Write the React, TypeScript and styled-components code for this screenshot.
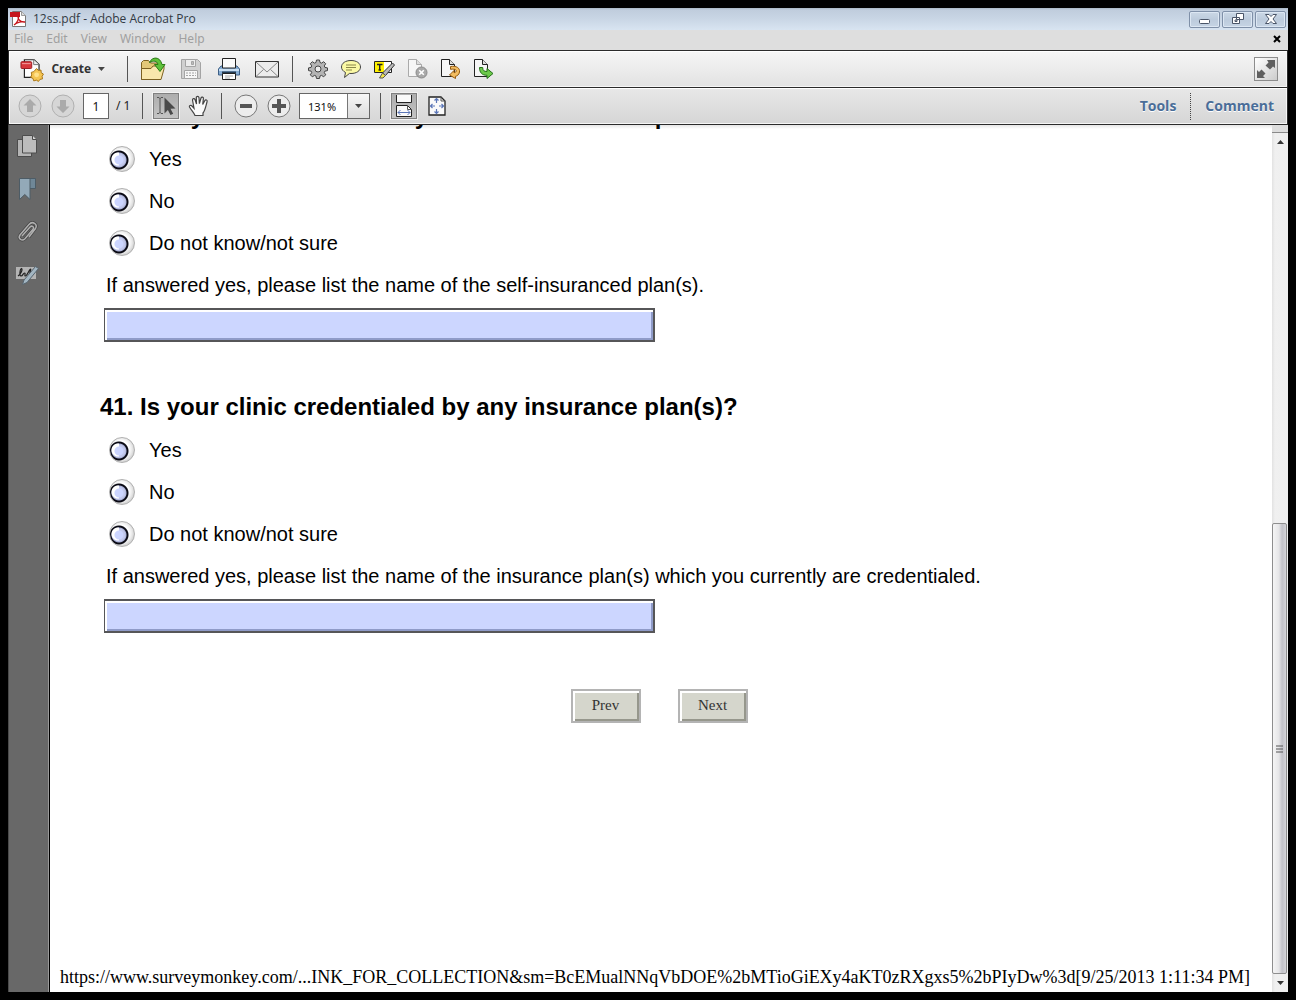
import React from "react";
import styled, { createGlobalStyle } from "styled-components";

const GlobalStyle = createGlobalStyle`
  *, *::before, *::after { box-sizing: border-box; }
  body { margin: 0; background: #000; }
  button, input, select { font: inherit; color: inherit; margin: 0; }
`;

const ui = `"Open Sans", "Noto Sans", sans-serif`;
const tahoma = `"Noto Sans", "DejaVu Sans", sans-serif`;

const Desktop = styled.div`
  height: 100vh;
  padding: 8px;
  background: #000;
`;

const Window = styled.div`
  height: 100%;
  display: flex;
  flex-direction: column;
  background: #dedede;
  font-family: ${ui};
`;

const TitleBar = styled.header`
  height: 22px;
  flex: none;
  display: flex;
  align-items: center;
  gap: 6px;
  padding: 0 2px 0 1px;
  background: linear-gradient(#a9b6c4 0, #c0cddd 2px, #c9d6e5 50%, #d8e4f1);
`;

const Title = styled.h1`
  margin: 0;
  flex: 1;
  font-size: 12px;
  line-height: 20px;
  font-weight: 400;
  color: #333a44;
`;

const WindowButtons = styled.div`
  display: flex;
  gap: 2px;
`;

const WindowButton = styled.button`
  width: 31px;
  height: 17px;
  padding: 0;
  display: grid;
  place-items: center;
  border: 1px solid #7f90a8;
  border-radius: 2px;
  box-shadow: inset 0 0 0 1px #dce7f3;
  background: linear-gradient(#cbd8e6, #bccbdc 50%, #c6d4e4);
`;

const MenuBar = styled.nav`
  height: 20px;
  flex: none;
  display: flex;
  align-items: center;
  gap: 13px;
  padding: 0 6px 2px;
  background: #dedede;
`;

const MenuItem = styled.button`
  border: 0;
  padding: 0;
  background: none;
  font-family: ${tahoma};
  font-size: 12px;
  line-height: 18px;
  color: #a0a0a0;
`;

const CloseDoc = styled.button`
  margin-left: auto;
  width: 10px;
  height: 10px;
  padding: 0;
  display: grid;
  place-items: center;
  border: 0;
  background: none;
`;

const Toolbar = styled.div<{ $from: string; $to: string; $inset: number }>`
  height: 37px;
  flex: none;
  display: flex;
  align-items: center;
  padding: 0 9px 0 ${(p) => p.$inset}px;
  border: 1px solid #2b2b2b;
  border-bottom: 0;
  box-shadow: inset 1px 1px 0 #fff, inset -1px -1px 0 #f6f6f6;
  background: linear-gradient(${(p) => p.$from}, ${(p) => p.$to});
`;

const Separator = styled.span<{ $before?: number; $after?: number }>`
  width: 1px;
  height: 26px;
  flex: none;
  margin: 0 ${(p) => p.$after ?? 6}px 0 ${(p) => p.$before ?? 6}px;
  background: #555;
`;

const ToolButton = styled.button<{ $w?: number }>`
  width: ${(p) => p.$w ?? 33}px;
  height: 30px;
  flex: none;
  padding: 0;
  display: grid;
  place-items: center;
  border: 0;
  background: none;
`;

const PressedFace = styled.span`
  width: 26px;
  height: 26px;
  display: grid;
  place-items: center;
  border: 1px solid #808080;
  box-shadow: 0 0 0 1px #f2f2f2;
  background: linear-gradient(#adadad, #c4c4c4);
`;

const CreateButton = styled.button`
  width: 85px;
  display: flex;
  align-items: center;
  gap: 7px;
  padding: 0;
  border: 0;
  background: none;
  font-size: 12px;
  line-height: 20px;
  font-weight: 700;
  color: #333;
`;

const ExpandButton = styled.button`
  width: 24px;
  height: 24px;
  margin-left: auto;
  padding: 0;
  display: grid;
  place-items: center;
  border: 1px solid #8c8c8c;
  background: linear-gradient(135deg, #fff, #ccc);
`;

const PageInput = styled.input`
  width: 26px;
  height: 26px;
  margin: 0 7px 0 4px;
  padding: 0;
  border: 1px solid #666;
  background: #fff;
  text-align: center;
  font-family: ${tahoma};
  font-size: 12px;
  color: #111;
`;

const PageCount = styled.span`
  width: 20px;
  font-family: ${tahoma};
  font-size: 12px;
  line-height: 20px;
  color: #222;
  white-space: nowrap;
`;

const ZoomField = styled.div`
  width: 71px;
  height: 26px;
  margin-left: 4px;
  display: grid;
  grid-template-columns: 1fr 22px;
  border: 1px solid #666;
  background: #fff;
`;

const ZoomSelect = styled.select`
  grid-area: 1 / 1 / 2 / 3;
  appearance: none;
  width: 100%;
  border: 0;
  padding: 0 0 0 8px;
  background: none;
  font-family: ${tahoma};
  font-size: 11px;
  color: #111;
`;

const ZoomArrow = styled.span`
  grid-area: 1 / 2;
  display: grid;
  place-items: center;
  pointer-events: none;
  border-left: 1px solid #777;
  background: linear-gradient(#f7f7f7, #dcdcdc);
`;

const Panels = styled.div`
  display: flex;
  align-items: center;
  margin-left: auto;
  padding-right: 4px;
`;

const PanelButton = styled.button`
  padding: 0;
  border: 0;
  background: none;
  font-size: 14px;
  line-height: 20px;
  font-weight: 700;
  color: #4a6d98;
  text-shadow: 0 1px 0 #fff;
`;

const DottedRule = styled.span`
  height: 27px;
  margin: 0 14px;
  border-left: 1px dotted #444;
`;

const Body = styled.div`
  flex: 1;
  min-height: 0;
  display: flex;
  border-top: 1px solid #2b2b2b;
`;

const SideBar = styled.aside`
  width: 42px;
  flex: none;
  display: flex;
  flex-direction: column;
  align-items: center;
  gap: 17px;
  padding: 8px 4px 0 0;
  background: #686868;
  border-left: 1px solid #4a4a4a;
  border-right: 1px solid #000;
  box-shadow: inset -1px 0 0 #999;
`;

const SideButton = styled.button`
  width: 26px;
  height: 26px;
  padding: 0;
  display: grid;
  place-items: center;
  border: 0;
  background: none;
`;

const Page = styled.main`
  flex: 1;
  min-width: 0;
  overflow: hidden;
  display: flex;
  flex-direction: column;
  background: linear-gradient(#e6e6e6, #fff 4px);
  color: #000;
`;

const Survey = styled.form`
  flex: 1;
  margin-top: -30px;
`;

const Question = styled.fieldset`
  margin: 0 0 44px;
  padding: 0 0 0 54px;
  border: 0;
  min-width: 0;
  font-family: "Liberation Sans", Arial, sans-serif;
  font-size: 20px;
`;

const QuestionTitle = styled.legend`
  height: 43px;
  margin-left: -4px;
  padding: 0;
  font-size: 24px;
  line-height: 42px;
  font-weight: 700;
  white-space: nowrap;
`;

const Choice = styled.label`
  height: 42px;
  display: flex;
  align-items: center;
  gap: 14px;
  padding-left: 5px;
  line-height: 24px;
`;

const Radio = styled.input`
  appearance: none;
  width: 26px;
  height: 26px;
  border: 1px solid #b0b0b0;
  border-radius: 50%;
  background:
    radial-gradient(circle at 9px 13px, #ccd5ff 0 4px, transparent 5px),
    radial-gradient(circle at 8px 12px, #fff 0 6px, transparent 7px) 0 0 / 9px 100% no-repeat,
    radial-gradient(circle at 9px 13px, #c3c9ec 0 6px, #a9b0d6 7px, #0a0a14 8px 9px, transparent 10px),
    radial-gradient(circle at 11px 11px, #fff 0 8px, #e9e9e9 11px, #cacaca 14px);
  background-origin: padding-box;
`;

const Prompt = styled.label`
  display: block;
  height: 42px;
  padding-left: 2px;
  line-height: 42px;
  white-space: nowrap;
`;

const Answer = styled.input`
  display: block;
  width: 551px;
  max-width: 100%;
  height: 34px;
  margin-top: 2px;
  padding: 0 8px;
  border: 2px solid #565658;
  border-left-width: 1px;
  background: #ccd6ff;
  box-shadow: inset 2px 2px 0 #fff, inset -2px -2px 0 #8f9bc8;
`;

const Actions = styled.div`
  display: flex;
  justify-content: center;
  gap: 37px;
  margin-top: 56px;
  padding-right: 4px;
`;

const NavButton = styled.button`
  width: 70px;
  height: 34px;
  padding: 0 0 1px;
  border: 2px solid #b4b4b4;
  background: #d5d6cc;
  box-shadow: inset 2px 2px 0 #fff, inset -2px -2px 0 #96978c;
  font-family: "Liberation Serif", "Times New Roman", serif;
  font-size: 15px;
  color: #333;
`;

const PageFooter = styled.footer`
  padding: 0 10px 4px;
  font-family: "Liberation Serif", "Times New Roman", serif;
  font-size: 18px;
  line-height: 22px;
  white-space: nowrap;
`;

const ScrollBar = styled.div`
  width: 16px;
  flex: none;
  display: flex;
  flex-direction: column;
  background: linear-gradient(90deg, #e2e2e2, #f0f0f0 3px, #eee);
`;

const Splitter = styled.div`
  height: 8px;
  border-bottom: 1px solid #8a8a8a;
  background: #dedede;
`;

const ScrollArrow = styled.button`
  height: 18px;
  padding: 0;
  display: grid;
  place-items: center;
  border: 0;
  background: none;
`;

const Track = styled.div`
  flex: 1;
  display: grid;
  grid-template-rows: 372fr 451fr;
`;

const Thumb = styled.div`
  grid-row: 2;
  display: grid;
  place-items: center;
  margin-right: 1px;
  border: 1px solid #8e8e8e;
  border-radius: 2px;
  background: linear-gradient(90deg, #f5f5f5, #e6e6e8 45%, #c2c2c8 70%, #d4d4d8);
`;

const PdfLogo = () => (
  <svg width="18" height="18" viewBox="0 0 18 18">
    <path d="M3.500 1.500h9l4 4v11h-13z" fill="#fff" stroke="#777" />
    <path d="M12.500 1.500v4h4" fill="#ddd" stroke="#999" />
    <path d="M1 2h10v5H1z" fill="#c5161d" />
    <path d="M5 15c3-2 5-6 4.500-8.500-1.500 2 2 6 6.500 5.500-3-1-8 .5-11 3z" fill="none" stroke="#c5161d" strokeWidth="1.300" />
  </svg>
);

const CreateIcon = () => (
  <svg width="25" height="26" viewBox="0 0 25 26">
    <path d="M4.500 3.500h10l5 5v13h-15z" fill="#fdfdfd" stroke="#222" strokeWidth="1.200" />
    <path d="M14 3.500v5h5.500" fill="#eee" stroke="#777" />
    <rect x="1" y="5.500" width="11" height="7" rx="1" fill="#d8383c" stroke="#9e1d22" />
    <path d="M2 7.500h9" stroke="#f3a0a0" />
    <path d="M17 12.500l1.800 2 2.700-.4.200 2.700 2.300 1.400-1.400 2.300.5 2.600-2.600.5-1.600 2.100-2.200-1.300-2.600.8-.8-2.500-2.400-1.200 1.100-2.400-.5-2.600 2.600-.8z" fill="#f5c552" stroke="#a87518" />
    <circle cx="17" cy="19" r="2.500" fill="#ffe18a" />
  </svg>
);

const Caret = ({ color = "#444" }: { color?: string }) => (
  <svg width="7" height="4" viewBox="0 0 7 4"><path d="M0 0h7L3.500 4z" fill={color} /></svg>
);

const FolderIcon = () => (
  <svg width="26" height="26" viewBox="0 0 26 26">
    <path d="M1.500 6.500l2-2h5l2 2.500h9.500v16.500H1.500z" fill="#e3c878" stroke="#7c6122" />
    <path d="M1.500 23.500V12.500H11l2-2.500h11v3l-3 10.500z" fill="#f9e7ac" stroke="#7c6122" />
    <path d="M9.500 6.500C12 .5 20 0 22 8.500h3L20 15.500l-5.500-7H18c-1-4-4.500-4-8.500-2z" fill="#5fc23a" stroke="#2b7a17" />
  </svg>
);

const SaveIcon = () => (
  <svg width="22" height="22" viewBox="0 0 22 22" stroke="#a4a4a4">
    <path d="M1.500 1.500h16l3 3v16h-19z" fill="#d0d0d0" />
    <path d="M5.500 1.500h10v7h-10z" fill="#ececec" />
    <path d="M11.500 3.500h2v3h-2z" fill="#bbb" />
    <path d="M4.500 12.500h13v8h-13z" fill="#f6f6f6" />
    <path d="M6 15h10M6 17.500h10" strokeDasharray="2 1" />
  </svg>
);

const PrintIcon = () => (
  <svg width="24" height="24" viewBox="0 0 24 24">
    <path d="M1.500 12l2.500-3h16l2.500 3v6h-21z" fill="#88aed4" stroke="#3d5f86" />
    <path d="M2 13h20" stroke="#c9dff3" strokeWidth="2" />
    <path d="M5.500 1.500h13V11h-13z" fill="#fafafa" stroke="#222" />
    <path d="M5 15.500h14" stroke="#243b52" strokeWidth="2" />
    <path d="M5.500 16.500h13v6h-13z" fill="#fff" stroke="#222" />
    <path d="M8 19h8M8 21h5" stroke="#aaa" />
  </svg>
);

const MailIcon = () => (
  <svg width="24" height="17" viewBox="0 0 24 17">
    <path d="M.5.500h23v15.500H.5z" fill="#ececec" stroke="#333" />
    <path d="M1 1l11 10L23 1M1 15.500l7.500-7M23 15.500l-7.500-7" fill="none" stroke="#888" />
  </svg>
);

const GearIcon = () => (
  <svg width="20" height="20" viewBox="0 0 20 20">
    <path d="M8.500 1h3l.5 2.500 1.500.6L15.700 2.700l2 2-1.400 2.200.6 1.500 2.600.5v2.700l-2.600.5-.6 1.500 1.400 2.200-2 2-2.200-1.400-1.500.6-.5 2.500h-3L8 17l-1.500-.6-2.200 1.400-2-2 1.400-2.200L3.100 12.100.5 11.600V8.900l2.600-.5.600-1.500-1.400-2.200 2-2 2.200 1.400L8 3.500z" fill="#b4b4b4" stroke="#444" />
    <circle cx="10" cy="10" r="3" fill="#ededed" stroke="#444" />
  </svg>
);

const CommentIcon = () => (
  <svg width="22" height="20" viewBox="0 0 22 20">
    <path d="M11 1.500c5.500 0 9.500 2.700 9.500 6.500s-4 6.500-9.500 6.500l-1.500-.1L4.500 18.500l1-5C3 12.200 1.500 10.300 1.500 8c0-3.800 4-6.500 9.500-6.500z" fill="#fbf9a5" stroke="#444" />
    <path d="M6 6h10M6 8.500h10M6 11h6" stroke="#8b8748" />
  </svg>
);

const HighlightIcon = () => (
  <svg width="22" height="20" viewBox="0 0 22 20">
    <path d="M1.500 2.500h17v11h-17z" fill="#fff" stroke="#222" />
    <path d="M2 3h9v10H2z" fill="#fff100" />
    <path d="M4 5.500h5.500M6.700 5.500V11M5.500 11h2.500" stroke="#222" strokeWidth="1.400" />
    <path d="M19.500 4l2 2-9 10.500-3-2.500z" fill="#b8b8b8" stroke="#333" />
    <path d="M9.500 14l3 2.500-2.500 2.500H6.500z" fill="#f2e64a" stroke="#555" />
  </svg>
);

const DocIcon = ({ kind }: { kind: "remove" | "undo" | "send" }) => {
  const ink = kind === "remove" ? "#aaa" : "#222";
  return (
    <svg width="24" height="24" viewBox="0 0 24 24">
      <path d="M3.500 2.500h8l5 5v12h-13z" fill="#f6f6f6" stroke={ink} />
      <path d="M11.500 2.500v5h5" fill="#ddd" stroke={ink} />
      {kind === "remove" && (
        <g>
          <circle cx="16.500" cy="15.500" r="5.500" fill="#a9a9a9" stroke="#8a8a8a" />
          <path d="M14.200 13.200l4.600 4.600m0-4.600l-4.600 4.600" stroke="#fff" strokeWidth="1.600" />
        </g>
      )}
      {kind === "undo" && (
        <path d="M12.500 9.500c6-1 9.500 1.500 9 5.500-.4 2.800-2.500 4-4 4.300v2.200L11.500 18l4.500-4.500v2.200c1.500-.2 2.500-1 2.200-2.200-.4-1.500-3-1.500-5.700-1.200z" fill="#f3bd61" stroke="#945a10" />
      )}
      {kind === "send" && (
        <path d="M8.500 10.500h3.200c0 3 1.300 4 4.300 4V11.500l6 5-6 5v-3.200c-5 0-7.500-2.800-7.500-7.800z" fill="#6cc94a" stroke="#24701a" />
      )}
    </svg>
  );
};

const CircleIcon = ({ kind }: { kind: "up" | "down" | "minus" | "plus" }) => {
  const off = kind === "up" || kind === "down";
  const shape = {
    up: "M12 5l6.500 6.500H15V18H9v-6.500H5.500z",
    down: "M12 19l6.500-6.500H15V6H9v6.500H5.500z",
    minus: "M6 10h12v4H6z",
    plus: "M10 5h4v5h5v4h-5v5h-4v-5H5v-4h5z",
  }[kind];
  return (
    <svg width="24" height="24" viewBox="0 0 24 24">
      <circle cx="12" cy="12" r="11" fill={off ? "#d6d6d6" : "#ededed"} stroke={off ? "#b0b0b0" : "#777"} />
      <path d={shape} fill={off ? "#aaa" : "#555"} />
    </svg>
  );
};

const SelectIcon = () => (
  <svg width="22" height="22" viewBox="0 0 22 22">
    <path d="M2 2.500h2l1 1 1-1h2M5 3v15M2 18.500h2l1-1 1 1h2" fill="none" stroke="#555" />
    <path d="M9.500 2.500l11 11-5 .2 2.700 5-2.700 1.300-2.600-5-3.400 3.500z" fill="#4a4a4a" />
  </svg>
);

const HandIcon = () => (
  <svg width="22" height="22" viewBox="0 0 22 22">
    <path d="M7 20.500c-1-3-3.500-5-5.500-8.500-.6-1.500 1.500-2.200 2.500-1l2 2.200L4.500 5c-.2-1.700 2-2 2.500-.5L8.500 9 8.300 2.700C8.300 1 10.700 1 11 2.700l.4 6L13 3c.5-1.600 2.700-1 2.400.6L14.700 9.500l2.200-4c.8-1.400 2.700-.4 2.200 1-1.300 4.500-1.800 9-4.100 11.500v2.500z" fill="#fafafa" stroke="#444" strokeWidth="1.200" />
  </svg>
);

const FitWidthIcon = () => (
  <svg width="20" height="22" viewBox="0 0 20 22">
    <path d="M2.500 0v7.500h15V0" fill="#fafafa" stroke="#222" />
    <path d="M2.500 21.500v-11h11l4 4v7z" fill="#fafafa" stroke="#222" />
    <path d="M13.500 10.500v4h4" fill="none" stroke="#555" />
    <path d="M4 17.500h12M6.500 15L4 17.500 6.500 20M13.500 15l2.500 2.500-2.500 2.500" fill="none" stroke="#5b76b8" />
  </svg>
);

const FitPageIcon = () => (
  <svg width="18" height="20" viewBox="0 0 18 20">
    <path d="M1 1h12l4 4v14H1z" fill="#fafafa" stroke="#222" strokeWidth="1.300" />
    <path d="M13 1v4h4" fill="none" stroke="#555" />
    <path d="M6.500 4.500L8.500 2.500l2 2M8.500 3v4M6.500 15.500l2 2 2-2M8.500 17v-4M4.500 8L2.500 10l2 2M3 10h4M13.500 8l2 2-2 2M15 10h-4" fill="none" stroke="#5b76b8" strokeWidth="1.200" />
  </svg>
);

const ExpandIcon = () => (
  <svg width="20" height="20" viewBox="0 0 20 20" fill="#606060">
    <path d="M19 1v8l-2-1.500-3 3-4.500-4 3-3L11 1z" />
    <path d="M1 19v-8l2 2 2.500-2.500 4 4L7 17l2 2z" />
  </svg>
);

const PagesIcon = () => (
  <svg width="22" height="24" viewBox="0 0 22 24" stroke="#4c4c4c">
    <path d="M1.500 5.500h14v17h-14z" fill="#b5b5b5" />
    <path d="M6.500 1.500h10l4 4v13.500h-14z" fill="#bcbcbc" />
    <path d="M16.500 1.500v4h4" fill="#d6d6d6" />
  </svg>
);

const BookmarkIcon = () => (
  <svg width="20" height="24" viewBox="0 0 20 24" stroke="#4d5c66">
    <path d="M11 1.500h7.500v10H11z" fill="#6f8797" />
    <path d="M2.500 1.500H13v21l-5.200-5-5.300 5z" fill="#93a9b8" />
  </svg>
);

const ClipIcon = () => (
  <svg width="24" height="26" viewBox="0 0 24 26" fill="none">
    <path d="M7 17l8-9c2-2 4.500 0 3 2.200l-8 9.500c-3 3-7.500 0-5-3.700l9-10.500c3.500-4 9-.5 6.500 4L14 18" stroke="#444" strokeWidth="3" />
    <path d="M7 17l8-9c2-2 4.500 0 3 2.200l-8 9.500c-3 3-7.500 0-5-3.700l9-10.500c3.500-4 9-.5 6.500 4L14 18" stroke="#b0b0b0" strokeWidth="1.500" />
  </svg>
);

const SignIcon = () => (
  <svg width="24" height="20" viewBox="0 0 24 20">
    <path d="M1 2h20v12H1z" fill="#b4b4b4" />
    <path d="M3 11c3-2 5-7 3.500-7.500C5 4 4 11 6 11s2-3 3.500-3-.5 3 1 3 4-7 5-7-2 6 0 6" fill="none" stroke="#222" strokeWidth="1.200" />
    <path d="M23.500 3.500L12 17.500 7.500 19.500 9 15 20.500 1.500z" fill="#a3b6c2" stroke="#56646f" />
  </svg>
);

interface QuestionData {
  id: string;
  title: string;
  prompt: string;
}

const questions: QuestionData[] = [
  {
    id: "q40",
    title: "40. Has your clinic billed any self-insured health plans?",
    prompt: "If answered yes, please list the name of the self-insuranced plan(s).",
  },
  {
    id: "q41",
    title: "41. Is your clinic credentialed by any insurance plan(s)?",
    prompt: "If answered yes, please list the name of the insurance plan(s) which you currently are credentialed.",
  },
];

const choices = ["Yes", "No", "Do not know/not sure"];

export default function App() {
  return (
    <Desktop>
      <GlobalStyle />
      <Window>
        <TitleBar>
          <PdfLogo />
          <Title>12ss.pdf - Adobe Acrobat Pro</Title>
          <WindowButtons>
            <WindowButton aria-label="Minimize">
              <svg width="12" height="12" viewBox="0 0 12 12"><rect x=".5" y="6.500" width="10" height="4" rx="1" fill="#fff" stroke="#4a5568" /></svg>
            </WindowButton>
            <WindowButton aria-label="Restore">
              <svg width="12" height="12" viewBox="0 0 12 12" fill="#fff" stroke="#4a5568"><path d="M4.500.5h7v6h-7zM.5 4.500h7v6h-7z" /><path d="M3 7h2v1.500H3z" /></svg>
            </WindowButton>
            <WindowButton aria-label="Close">
              <svg width="12" height="10" viewBox="0 0 12 10"><path d="M.5.5h3.500L6 2.500 8 .5h3.500L8 5l3.500 4.500H8l-2-2-2 2H.5L4 5z" fill="#fff" stroke="#4a5568" /></svg>
            </WindowButton>
          </WindowButtons>
        </TitleBar>
        <MenuBar>
          {["File", "Edit", "View", "Window", "Help"].map((m) => (
            <MenuItem key={m}>{m}</MenuItem>
          ))}
          <CloseDoc aria-label="Close document">
            <svg width="8" height="8" viewBox="0 0 8 8"><path d="M1 1l6 6M7 1L1 7" stroke="#000" strokeWidth="2" /></svg>
          </CloseDoc>
        </MenuBar>
        <Toolbar $from="#f6f6f6" $to="#e2e2e2" $inset={11}>
          <CreateButton>
            <CreateIcon />
            Create
            <Caret />
          </CreateButton>
          <Separator $before={22} />
          <ToolButton $w={38} aria-label="Open"><FolderIcon /></ToolButton>
          <ToolButton $w={38} aria-label="Save"><SaveIcon /></ToolButton>
          <ToolButton $w={38} aria-label="Print"><PrintIcon /></ToolButton>
          <ToolButton $w={38} aria-label="Email"><MailIcon /></ToolButton>
          <Separator $after={8} />
          <ToolButton aria-label="Preferences"><GearIcon /></ToolButton>
          <ToolButton aria-label="Add note"><CommentIcon /></ToolButton>
          <ToolButton aria-label="Highlight text"><HighlightIcon /></ToolButton>
          <ToolButton aria-label="Delete pages"><DocIcon kind="remove" /></ToolButton>
          <ToolButton aria-label="Rotate pages"><DocIcon kind="undo" /></ToolButton>
          <ToolButton aria-label="Export"><DocIcon kind="send" /></ToolButton>
          <ExpandButton aria-label="Read mode"><ExpandIcon /></ExpandButton>
        </Toolbar>
        <Toolbar $from="#e8e8e8" $to="#d6d6d6" $inset={4}>
          <ToolButton aria-label="Previous page"><CircleIcon kind="up" /></ToolButton>
          <ToolButton aria-label="Next page"><CircleIcon kind="down" /></ToolButton>
          <PageInput aria-label="Page number" defaultValue="1" />
          <PageCount>/ 1</PageCount>
          <Separator />
          <ToolButton aria-label="Select"><PressedFace><SelectIcon /></PressedFace></ToolButton>
          <ToolButton aria-label="Hand"><HandIcon /></ToolButton>
          <Separator $after={7} />
          <ToolButton aria-label="Zoom out"><CircleIcon kind="minus" /></ToolButton>
          <ToolButton aria-label="Zoom in"><CircleIcon kind="plus" /></ToolButton>
          <ZoomField>
            <ZoomSelect aria-label="Zoom" defaultValue="131%">
              <option>131%</option>
            </ZoomSelect>
            <ZoomArrow><Caret /></ZoomArrow>
          </ZoomField>
          <Separator $before={10} />
          <ToolButton aria-label="Fit width"><PressedFace><FitWidthIcon /></PressedFace></ToolButton>
          <ToolButton aria-label="Fit page"><FitPageIcon /></ToolButton>
          <Panels>
            <PanelButton>Tools</PanelButton>
            <DottedRule />
            <PanelButton>Comment</PanelButton>
          </Panels>
        </Toolbar>
        <Body>
          <SideBar>
            <SideButton aria-label="Page thumbnails"><PagesIcon /></SideButton>
            <SideButton aria-label="Bookmarks"><BookmarkIcon /></SideButton>
            <SideButton aria-label="Attachments"><ClipIcon /></SideButton>
            <SideButton aria-label="Signatures"><SignIcon /></SideButton>
          </SideBar>
          <Page>
            <Survey onSubmit={(e) => e.preventDefault()}>
              {questions.map((q) => (
                <Question key={q.id}>
                  <QuestionTitle>{q.title}</QuestionTitle>
                  {choices.map((c) => (
                    <Choice key={c}>
                      <Radio type="radio" name={q.id} value={c} />
                      {c}
                    </Choice>
                  ))}
                  <Prompt htmlFor={`${q.id}-plans`}>{q.prompt}</Prompt>
                  <Answer id={`${q.id}-plans`} type="text" />
                </Question>
              ))}
              <Actions>
                <NavButton type="button">Prev</NavButton>
                <NavButton type="button">Next</NavButton>
              </Actions>
            </Survey>
            <PageFooter>
              https://www.surveymonkey.com/...INK_FOR_COLLECTION&amp;sm=BcEMualNNqVbDOE%2bMTioGiEXy4aKT0zRXgxs5%2bPIyDw%3d[9/25/2013 1:11:34 PM]
            </PageFooter>
          </Page>
          <ScrollBar>
            <Splitter />
            <ScrollArrow aria-label="Scroll up">
              <svg width="7" height="4" viewBox="0 0 7 4"><path d="M0 4h7L3.500 0z" fill="#333" /></svg>
            </ScrollArrow>
            <Track>
              <Thumb>
                <svg width="7" height="8" viewBox="0 0 7 8"><path d="M0 1h7M0 4h7M0 7h7" stroke="#555" /></svg>
              </Thumb>
            </Track>
            <ScrollArrow aria-label="Scroll down"><Caret color="#333" /></ScrollArrow>
          </ScrollBar>
        </Body>
      </Window>
    </Desktop>
  );
}
